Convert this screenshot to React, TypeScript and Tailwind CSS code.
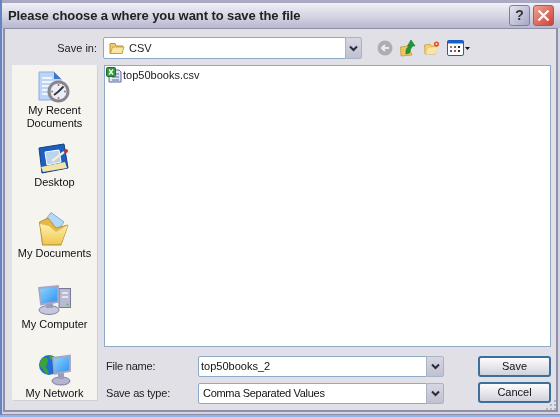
const font = { fontFamily: '"Liberation Sans", Arial, sans-serif' };

function Chevron() {
  return (
    <svg width="9" height="7" viewBox="0 0 9 7"><path d="M1 1.5 L4.5 5 L8 1.5" fill="none" stroke="#2a2a3a" strokeWidth="2" /></svg>
  );
}

function ComboButton({ className }: { className: string }) {
  return (
    <div className={"flex items-center justify-center rounded-[2px] border border-[#a9b3c6] bg-gradient-to-b from-[#d6d7e2] to-[#bfc1d2] " + className}>
      <Chevron />
    </div>
  );
}

function Folder({ size = 16 }: { size?: number }) {
  return (
    <svg width={size} height={size} viewBox="0 0 16 16">
      <path d="M1 4 L1 13.5 L13 13.5 L14 6 L7 6 L6 3.5 L2 3.5 Z" fill="#f0cf70" stroke="#b8923a" />
      <path d="M1.5 13.5 L3.5 7 L15 7 L13 13.5 Z" fill="#fbe6a0" stroke="#b8923a" strokeWidth=".7" />
    </svg>
  );
}

function RecentIcon() {
  return (
    <svg width="32" height="32" viewBox="0 0 32 32">
      <path d="M1 1 H16 L23 8 V29 H1 Z" fill="#bcd4f6" stroke="#8eabdc" />
      <path d="M16 1 L23 8 H16 Z" fill="#3f78c8" />
      <path d="M4 7 H14 M4 11 H16 M4 15 H13 M4 19 H10 M4 23 H10" stroke="#ffffff" strokeWidth="1.6" />
      <circle cx="20.5" cy="20.5" r="11" fill="#85878f" />
      <circle cx="20.5" cy="20.5" r="8" fill="#e7eefa" />
      <path d="M20.5 20.5 L25.5 15.5 M20.5 20.5 L16 24" stroke="#333" strokeWidth="1.8" />
      <circle cx="20.5" cy="14" r="1" fill="#e05a30" />
      <circle cx="20.5" cy="27" r="1" fill="#e05a30" />
      <circle cx="14" cy="20.5" r="1" fill="#e05a30" />
      <circle cx="27" cy="20.5" r="1" fill="#e05a30" />
    </svg>
  );
}

function DesktopIcon() {
  return (
    <svg width="32" height="32" viewBox="0 0 32 32">
      <path d="M1 5 L26 1 L30 25 L4 30 Z" fill="#1c5fc0" stroke="#123f88" />
      <path d="M3 24 L27 19 L29 25 L5 29 Z" fill="#f3e3a4" />
      <path d="M7 9 L21 7 L23 19 L9 22 Z" fill="#bcd3ee" stroke="#ffffff" />
      <path d="M14 18 L26 9" stroke="#f6eed0" strokeWidth="2.2" />
      <circle cx="28" cy="8" r="2" fill="#c8352a" />
    </svg>
  );
}

function DocumentsIcon() {
  return (
    <svg width="30" height="34" viewBox="0 0 30 34">
      <defs>
        <linearGradient id="docFold" x1="0" y1="0" x2="0" y2="1">
          <stop offset="0" stopColor="#fdf0b0" />
          <stop offset="1" stopColor="#f0c850" />
        </linearGradient>
      </defs>
      <path d="M12 0.5 L25 10 L17 21 L5 10 Z" fill="#b4d8f8" stroke="#86aad4" />
      <path d="M0.5 10 L9 6 L17 16 L29 13 L22 33 L3.5 33 Z" fill="#e6b848" stroke="#b8923a" />
      <path d="M1 12 L10 14 L17 20 L29 13 L22 32 L4.5 32 Z" fill="url(#docFold)" />
    </svg>
  );
}

function ComputerIcon() {
  return (
    <svg width="34" height="32" viewBox="0 0 34 32">
      <defs>
        <linearGradient id="scrA" x1="0" y1="0" x2="1" y2="1">
          <stop offset="0" stopColor="#8fdcff" />
          <stop offset="1" stopColor="#2f8cec" />
        </linearGradient>
      </defs>
      <rect x="21" y="3.5" width="11.5" height="19" fill="#b9bad0" stroke="#77789a" />
      <rect x="24" y="7" width="6" height="2" fill="#e4e5f0" />
      <rect x="24" y="11" width="6" height="2" fill="#e4e5f0" />
      <circle cx="29.5" cy="19.5" r="1" fill="#50c050" />
      <ellipse cx="11" cy="25" rx="10" ry="4.5" fill="#c6c7dc" stroke="#8385a8" />
      <rect x="8" y="18" width="7" height="5" fill="#9c9dbb" />
      <path d="M1 3 L20 1 L20 17 L3 19.5 Z" fill="url(#scrA)" stroke="#a5a7c4" strokeWidth="1.8" />
    </svg>
  );
}

function NetworkIcon() {
  return (
    <svg width="34" height="32" viewBox="0 0 34 32">
      <defs>
        <linearGradient id="scrB" x1="0" y1="0" x2="1" y2="1">
          <stop offset="0" stopColor="#8fdcff" />
          <stop offset="1" stopColor="#2f8cec" />
        </linearGradient>
      </defs>
      <circle cx="11" cy="11" r="10" fill="#1f6fd0" />
      <path d="M4 4 Q10 2 10 7 L8 13 L11 19 L8 20 L4 14 L1 11 Z M11 1 L17 3 L12 6 Z" fill="#3da23a" />
      <ellipse cx="23" cy="27" rx="9" ry="4" fill="#b4b5d0" stroke="#7a7c9f" />
      <rect x="20" y="19" width="6" height="6" fill="#9c9dbb" />
      <path d="M15 4 L32 1.5 L32 17 L16.5 20 Z" fill="url(#scrB)" stroke="#a5a7c4" strokeWidth="1.8" />
    </svg>
  );
}

function CsvIcon() {
  return (
    <svg width="16" height="16" viewBox="0 0 16 16">
      <path d="M3 3 H13 L15 5 V15 H3 Z" fill="#dfe6f5" stroke="#5a6a9a" />
      <path d="M6 7 H13 M6 10 H13 M6 13 H13" stroke="#5a6a9a" />
      <rect x="0.5" y="0.5" width="9" height="9" rx="1" fill="#2f9a3a" stroke="#1e6e28" />
      <path d="M3 2.5 L7 7.5 M7 2.5 L3 7.5" stroke="#fff" strokeWidth="1.3" />
    </svg>
  );
}

function Toolbar() {
  return (
    <div className="flex items-center">
      <svg className="ml-[15px]" width="16" height="16" viewBox="0 0 16 16">
        <circle cx="8" cy="8" r="7.5" fill="#aeaeb2" />
        <path d="M12 8 H6 M8 5 L5 8 L8 11" stroke="#ebebeb" strokeWidth="2" fill="none" />
      </svg>
      <svg className="ml-[7px]" width="16" height="18" viewBox="0 0 16 18">
        <path d="M0.5 8 L8 7 L12 16 L1 17 Z" fill="#eec65a" stroke="#b8923a" strokeWidth=".7" />
        <path d="M6 15 Q5 9 10 7 L7.5 7 L11 1 L15 7 L12.5 7 Q10 10 9.5 14 Z" fill="#1d9a38" stroke="#146e28" strokeWidth=".6" />
      </svg>
      <svg className="ml-[8px]" width="16" height="14" viewBox="0 0 16 14">
        <path d="M0.5 4 L6 3 L7 5 L13 5 L11 13 L1 13 Z" fill="#f2cf6c" stroke="#c59c40" strokeWidth=".7" />
        <path d="M2 13 L4 7 L14 6 L11 13 Z" fill="#fbe6a0" />
        <circle cx="12.5" cy="3" r="2.6" fill="#e8502a" />
        <circle cx="12.5" cy="3" r="1" fill="#ffe4c0" />
      </svg>
      <svg className="ml-[7px]" width="17" height="16" viewBox="0 0 17 16">
        <rect x="0.5" y="0.5" width="16" height="15" rx="1.5" fill="#ffffff" stroke="#1b5fc4" />
        <rect x="0.5" y="0.5" width="16" height="3" fill="#1b5fc4" />
        <rect x="3" y="6" width="2" height="2" fill="#d0702a" />
        <rect x="7" y="6" width="2" height="2" fill="#2a8a3a" />
        <rect x="11" y="6" width="2" height="2" fill="#333333" />
        <rect x="3" y="10" width="2" height="2" fill="#2a5ac0" />
        <rect x="7" y="10" width="2" height="2" fill="#d0402a" />
        <rect x="11" y="10" width="2" height="2" fill="#333333" />
      </svg>
      <svg className="ml-[1px]" width="5" height="3" viewBox="0 0 5 3"><path d="M0 0 H5 L2.5 3 Z" fill="#111" /></svg>
    </div>
  );
}

function Place({ icon, label, h }: { icon: React.ReactNode; label: React.ReactNode; h: string }) {
  return (
    <div className={"flex shrink-0 flex-col items-center text-[11px] leading-[13px] text-[#111] " + h}>
      {icon}
      <div className="mt-[1px] text-center whitespace-nowrap">{label}</div>
    </div>
  );
}

function Field({ value, pad }: { value: string; pad: string }) {
  return (
    <div className="flex h-[21px] w-[246px]">
      <div className={"flex h-full flex-1 items-center rounded-l-[2px] border border-[#8fa9c9] bg-white text-[#111] " + pad}>{value}</div>
      <ComboButton className="ml-[-1px] h-[21px] w-[18px]" />
    </div>
  );
}

function Btn({ children }: { children: React.ReactNode }) {
  return (
    <div className="flex h-[21px] w-[73px] items-center justify-center rounded-[3px] border-2 border-[#3c6f9a] bg-gradient-to-b from-[#fdfdfd] to-[#d2d2de] text-[11px] text-[#111]">
      {children}
    </div>
  );
}

export default function App() {
  return (
    <div style={font} className="relative flex h-[417px] w-[560px] flex-col overflow-hidden bg-[#dfe0ea] blur-[0.35px]">
      <div className="flex min-h-0 flex-1 flex-col border-l-2 border-l-[#6484c8]">
        <div className="h-[3px] shrink-0 bg-[#a9a9c4]" />
        <div className="flex h-[25px] shrink-0 items-center justify-between bg-gradient-to-b from-[#f0f0f6] via-[#d6d6e4] to-[#b8b8d0] pl-[6px] pr-[6px]">
          <div className="text-[13px] font-bold tracking-[-0.08px] text-[#222]">Please choose a where you want to save the file</div>
          <div className="flex gap-[3px]">
            <div className="flex h-[21px] w-[21px] items-center justify-center rounded-[3px] border border-[#7d7da8] bg-gradient-to-br from-[#e4e4f0] to-[#a8a8c8] text-[14px] font-bold text-[#333]">?</div>
            <div className="flex h-[21px] w-[21px] items-center justify-center rounded-[3px] border border-[#a85a60] bg-gradient-to-br from-[#f0a090] to-[#c84038]">
              <svg width="13" height="13" viewBox="0 0 13 13"><path d="M1.5 1.5 L11.5 11.5 M11.5 1.5 L1.5 11.5" stroke="#fff" strokeWidth="2.2" /></svg>
            </div>
          </div>
        </div>
        <div className="flex min-h-0 flex-1 flex-col bg-[#d4d5e4] pb-[2px] pl-[1px] pr-[2px]">
          <div className="flex min-h-0 flex-1 flex-col border-x-2 border-b-2 border-t border-[#8f90a8] bg-[#e0e0e6] pl-[7px] pr-[5px]">
            <div className="flex h-[36px] shrink-0 items-center pt-[2px]">
              <div className="w-[85px] text-right text-[11px] text-[#222]">Save in:</div>
              <div className="ml-[6px] flex h-[22px] w-[259px]">
                <div className="flex flex-1 items-center gap-[4px] rounded-l-[2px] border border-[#8fa9c9] bg-white pl-[5px] text-[11px] text-[#222]">
                  <Folder />
                  CSV
                </div>
                <ComboButton className="ml-[-1px] h-[22px] w-[17px]" />
              </div>
              <Toolbar />
            </div>
            <div className="flex min-h-0 flex-1 items-start">
              <div className="flex h-[335px] w-[85px] shrink-0 flex-col items-center overflow-hidden rounded-[1px] bg-[#f5f4ef] pt-[6px] shadow-[1px_1px_0_#cfd0d8]">
                <Place h="h-[72px]" icon={<RecentIcon />} label={<>My Recent<br />Documents</>} />
                <Place h="h-[69px]" icon={<DesktopIcon />} label="Desktop" />
                <Place h="h-[73px]" icon={<DocumentsIcon />} label="My Documents" />
                <Place h="h-[69px]" icon={<ComputerIcon />} label="My Computer" />
                <Place h="h-[48px]" icon={<NetworkIcon />} label="My Network" />
              </div>
              <div className="ml-[7px] flex min-w-0 flex-1 flex-col">
                <div className="h-[282px] border border-[#8fa9c9] bg-white p-[1px]">
                  <div className="flex items-center gap-[1px] text-[11px] text-[#222]">
                    <CsvIcon />
                    top50books.csv
                  </div>
                </div>
                <div className="mt-[9px] flex">
                  <div className="flex flex-col gap-[6px] text-[11px]">
                    <div className="flex items-center">
                      <div className="w-[94px] pl-[2px] tracking-[-0.2px] text-[#222]">File name:</div>
                      <Field value="top50books_2" pad="pl-[2px]" />
                    </div>
                    <div className="flex items-center">
                      <div className="w-[94px] pl-[2px] tracking-[-0.2px] text-[#222]">Save as type:</div>
                      <Field value="Comma Separated Values" pad="pl-[4px] tracking-[-0.3px]" />
                    </div>
                  </div>
                  <div className="ml-[34px] flex flex-col gap-[5px]">
                    <Btn>Save</Btn>
                    <Btn>Cancel</Btn>
                  </div>
                </div>
              </div>
            </div>
          </div>
        </div>
        <div className="h-px shrink-0 bg-[#8d8da8]" />
      </div>
      <div className="h-[2px] shrink-0 bg-[#8fb6ea]" />
      <svg className="absolute left-[545px] top-[399px]" width="12" height="12" viewBox="0 0 12 12">
        <path d="M9 1 h2 v2 h-2 Z M5 5 h2 v2 h-2 Z M9 5 h2 v2 h-2 Z M1 9 h2 v2 h-2 Z M5 9 h2 v2 h-2 Z M9 9 h2 v2 h-2 Z" fill="#b4b5c4" />
      </svg>
    </div>
  );
}
